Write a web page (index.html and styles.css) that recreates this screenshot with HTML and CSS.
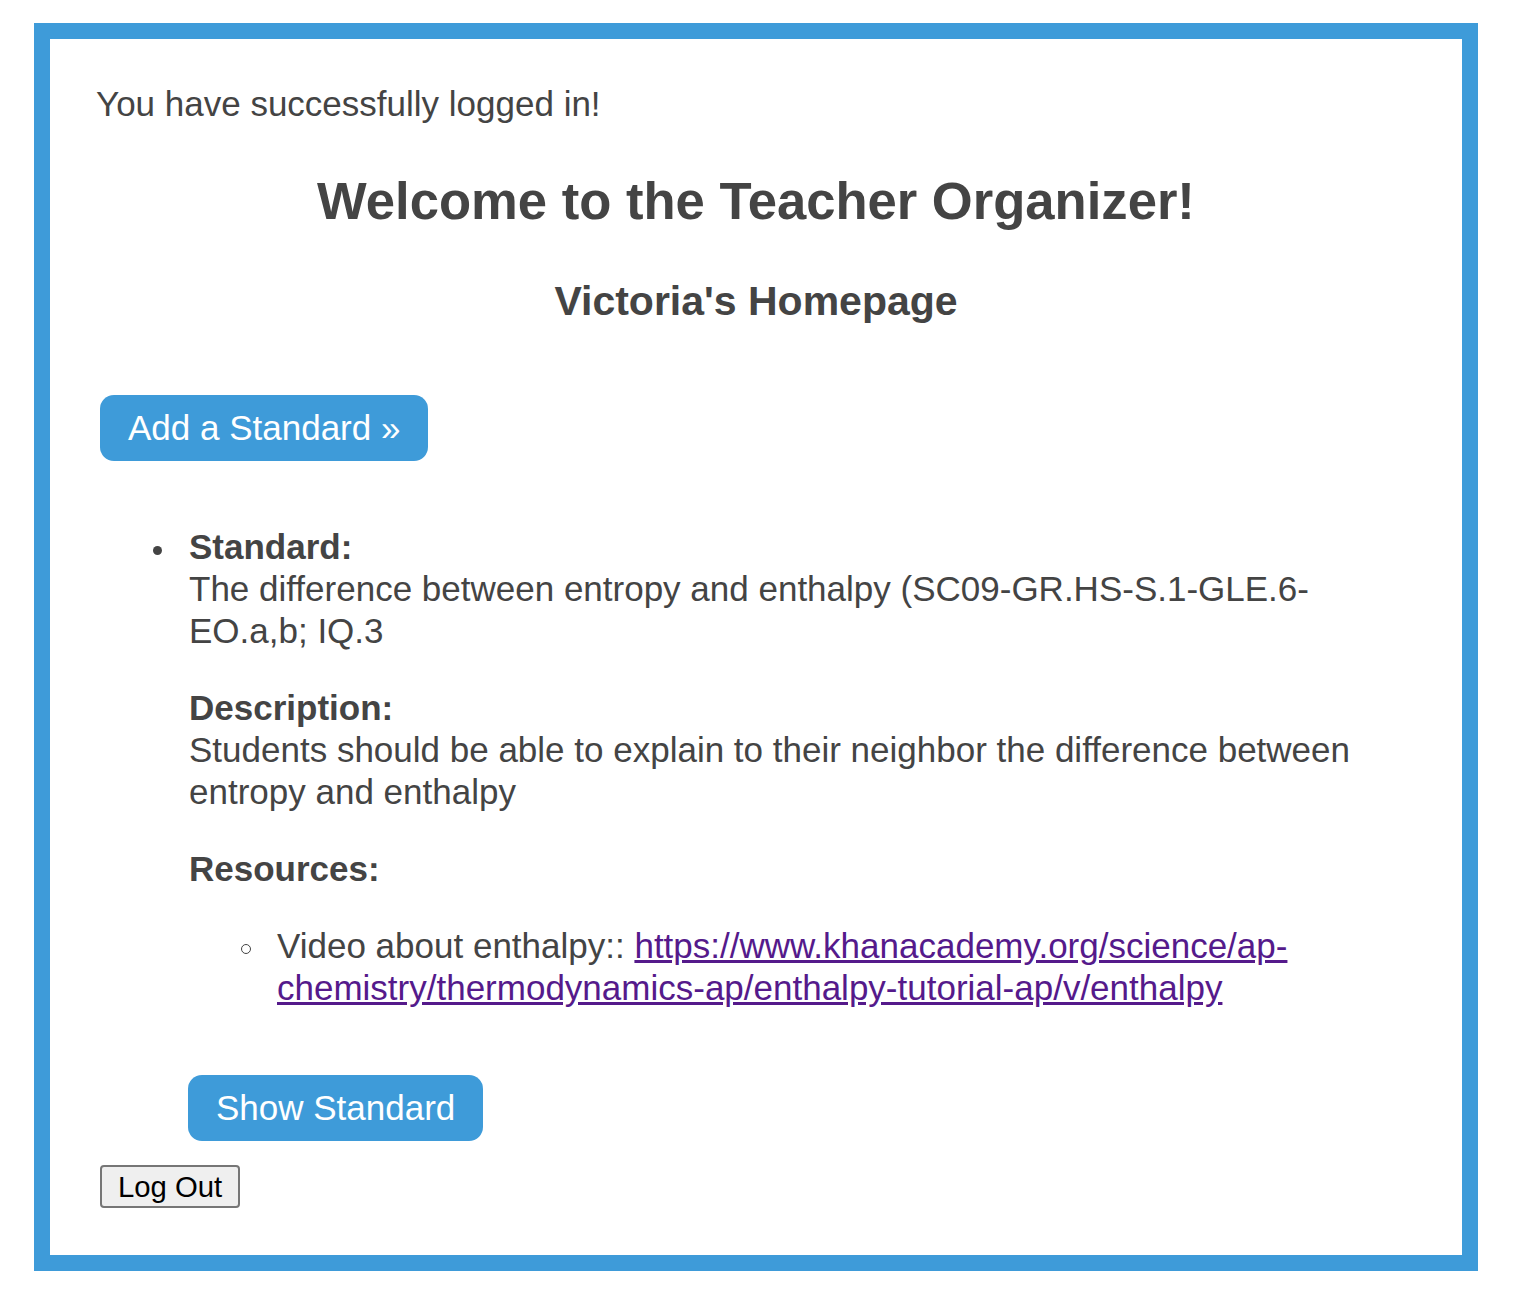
FILE: index.html
```html
<!DOCTYPE html>
<html lang="en">
<head>
<meta charset="utf-8">
<title>Teacher Organizer</title>
<link rel="stylesheet" href="styles.css">
</head>
<body>
<div class="frame">
  <p class="flash">You have successfully logged in!</p>
  <h1 class="title">Welcome to the Teacher Organizer!</h1>
  <h2 class="subtitle">Victoria's Homepage</h2>
  <div class="actions"><a class="btn" href="#">Add a Standard &raquo;</a></div>
  <ul class="standards">
    <li class="standard-item">
      <div class="field"><b>Standard:</b><br>The difference between entropy and enthalpy (SC09-GR.HS-S.1-GLE.6-EO.a,b; IQ.3</div>
      <div class="field spaced"><b>Description:</b><br>Students should be able to explain to their neighbor the difference between entropy and enthalpy</div>
      <div class="field spaced"><b>Resources:</b></div>
      <ul class="resources">
        <li class="resource-item">Video about enthalpy:: <a class="res-link" href="#">https://www.khanacademy.org/science/ap-chemistry/thermodynamics-ap/enthalpy-tutorial-ap/v/enthalpy</a></li>
      </ul>
      <div class="show"><a class="btn" href="#">Show Standard</a></div>
    </li>
  </ul>
  <div class="logout"><button class="logout-btn" type="button">Log Out</button></div>
</div>
</body>
</html>
```

FILE: styles.css
```css
html, body {
  margin: 0;
  padding: 0;
  background: #ffffff;
}

body {
  font-family: "Liberation Sans", Arial, Helvetica, sans-serif;
  font-size: 35px;
  line-height: 42px;
  color: #444444;
}

.frame {
  box-sizing: border-box;
  width: 1444px;
  margin: 23px 0 0 34px;
  border: 16px solid #3e9bd9;
  padding: 44px 50px 47px 50px;
}

.flash {
  margin: 0 0 0 -4px;
}

.title {
  margin: 45px 0 0;
  font-size: 52.6px;
  line-height: 61px;
  font-weight: bold;
  text-align: center;
}

.subtitle {
  margin: 46px 0 0;
  font-size: 41px;
  line-height: 48px;
  font-weight: bold;
  text-align: center;
}

.actions {
  display: flex;
  margin-top: 70px;
}

.btn {
  display: inline-block;
  background: #3e9bd9;
  color: #ffffff;
  text-decoration: none;
  font-size: 35px;
  line-height: 42px;
  padding: 12px 28px;
  border-radius: 14px;
}

.standards {
  margin: 65px 0 0;
  padding-left: 89px;
  list-style: none;
}

.standard-item {
  position: relative;
}

.standard-item::before {
  content: "";
  position: absolute;
  left: -36px;
  top: 20px;
  width: 9px;
  height: 9px;
  border-radius: 50%;
  background: #444444;
}

.field.spaced {
  margin-top: 35px;
}

.resources {
  margin: 35px 0 0;
  padding-left: 88px;
  list-style: none;
}

.resource-item {
  position: relative;
}

.resource-item::before {
  content: "";
  position: absolute;
  left: -36px;
  top: 19px;
  width: 8px;
  height: 8px;
  border-radius: 50%;
  border: 1.5px solid #444444;
}

.res-link {
  color: #551a8b;
  text-decoration: underline;
}

.show {
  display: flex;
  margin-top: 66px;
  margin-left: -1px;
}

.logout {
  display: flex;
  margin-top: 24px;
}

.logout-btn {
  font-family: "Liberation Sans", Arial, Helvetica, sans-serif;
  font-size: 29.3px;
  line-height: 39px;
  height: 43px;
  padding: 0 16px;
  color: #000000;
  background: #efefef;
  border: 2px solid #767676;
  border-radius: 4px;
}
```
